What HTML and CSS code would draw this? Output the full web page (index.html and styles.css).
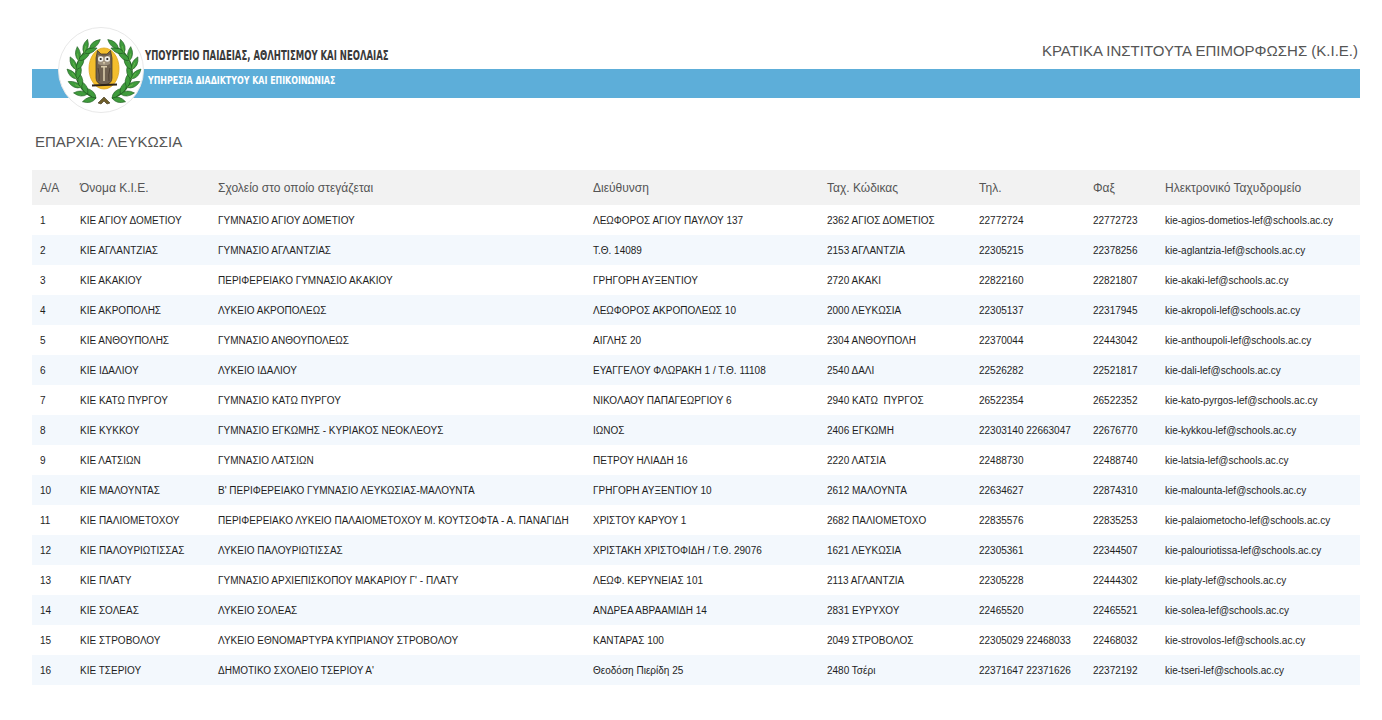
FILE: index.html
```html
<!DOCTYPE html>
<html lang="el">
<head>
<meta charset="utf-8">
<title>Κρατικά Ινστιτούτα Επιμόρφωσης</title>
<link rel="stylesheet" href="styles.css">
</head>
<body>
<div class="page">
  <header class="banner">
    <div class="logo">
      <svg width="86" height="86" viewBox="0 0 86 86">
        <defs>
          <path id="leaf" d="M0 0 Q5 -6 0 -14 Q-5 -6 0 0 Z"/>
          <g id="branch">
            <path d="M38 71.1 A27 27 0 0 1 31.5 21.6" fill="none" stroke="#2a6b25" stroke-width="1.4"/>
            <g fill="#3f9c3c" stroke="#1d5a1f" stroke-width="0.6">
              <use href="#leaf" transform="translate(38 71.1) rotate(255)"/>
              <use href="#leaf" transform="translate(38 71.1) rotate(315)"/>
              <use href="#leaf" transform="translate(29.5 67.1) rotate(275)"/>
              <use href="#leaf" transform="translate(29.5 67.1) rotate(335)"/>
              <use href="#leaf" transform="translate(22.9 60.5) rotate(295)"/>
              <use href="#leaf" transform="translate(22.9 60.5) rotate(355)"/>
              <use href="#leaf" transform="translate(18.9 52) rotate(315)"/>
              <use href="#leaf" transform="translate(18.9 52) rotate(15)"/>
              <use href="#leaf" transform="translate(18.1 42.6) rotate(335)"/>
              <use href="#leaf" transform="translate(18.1 42.6) rotate(35)"/>
              <use href="#leaf" transform="translate(20.5 33.6) rotate(355)"/>
              <use href="#leaf" transform="translate(20.5 33.6) rotate(55)"/>
              <use href="#leaf" transform="translate(25.9 25.9) rotate(15)"/>
              <use href="#leaf" transform="translate(25.9 25.9) rotate(70)"/>
              <use href="#leaf" transform="translate(31.5 21.6) rotate(50)"/>
            </g>
            <g stroke="#8fd05a" stroke-width="0.6" fill="none" opacity="0.8">
              <path d="M22.9 60.5 l-6 -3"/>
              <path d="M18.9 52 l-5 -6"/>
              <path d="M18.1 42.6 l-3 -7"/>
              <path d="M20.5 33.6 l-1 -7"/>
              <path d="M25.9 25.9 l2 -7"/>
            </g>
          </g>
        </defs>
        <circle cx="43" cy="43" r="42.5" fill="#fff" stroke="#e8e8e8" stroke-width="1"/>
        <ellipse cx="46" cy="41.5" rx="15" ry="20.5" fill="#f3be2d" stroke="#dca51d" stroke-width="0.8"/>
        <use href="#branch"/>
        <use href="#branch" transform="translate(92 0) scale(-1 1)"/>
        <path d="M40 76 L46 70 L52 76 L49 77 L46 74 L43 77 Z" fill="#6e5d2a" stroke="#3d3216" stroke-width="0.6"/>
        <path d="M38 31 L39.5 23.5 L43 27 L49 27 L52.5 23.5 L54 31 L54 51 Q54 57 46 58 Q38 57 38 51 Z" fill="#6f6150" stroke="#3b3024" stroke-width="0.7"/>
        <path d="M40 28 Q46 31 52 28 L52 37 Q46 40 40 37 Z" fill="#9d907c"/>
        <circle cx="42.7" cy="32" r="2.7" fill="#f0eee8"/>
        <circle cx="49.3" cy="32" r="2.7" fill="#f0eee8"/>
        <circle cx="42.7" cy="32" r="1.1" fill="#222"/>
        <circle cx="49.3" cy="32" r="1.1" fill="#222"/>
        <path d="M44.8 35 L47.2 35 L46 38 Z" fill="#d9ccab"/>
        <path d="M43 39 L49 39 L49 40.5 L46.8 40.5 L46.8 54 L45.2 54 L45.2 40.5 L43 40.5 Z" fill="#d9ccab"/>
        <path d="M40 41 Q42 48 41 54" stroke="#473b2e" stroke-width="0.8" fill="none"/>
        <path d="M52 41 Q50 48 51 54" stroke="#473b2e" stroke-width="0.8" fill="none"/>
        <path d="M34 58.5 L59 57.5" stroke="#2d2418" stroke-width="1.8"/>
      </svg>
    </div>
    <div class="banner-top">
      <div class="ministry"><span>ΥΠΟΥΡΓΕΙΟ ΠΑΙΔΕΙΑΣ, ΑΘΛΗΤΙΣΜΟΥ ΚΑΙ ΝΕΟΛΑΙΑΣ</span></div>
      <div class="site-title">ΚΡΑΤΙΚΑ ΙΝΣΤΙΤΟΥΤΑ ΕΠΙΜΟΡΦΩΣΗΣ (Κ.Ι.Ε.)</div>
    </div>
    <div class="banner-bar">
      <div class="service"><span>ΥΠΗΡΕΣΙΑ ΔΙΑΔΙΚΤΥΟΥ ΚΑΙ ΕΠΙΚΟΙΝΩΝΙΑΣ</span></div>
    </div>
  </header>

  <h2 class="district">ΕΠΑΡΧΙΑ: ΛΕΥΚΩΣΙΑ</h2>

  <table class="kie">
    <colgroup>
      <col class="c-aa"><col class="c-name"><col class="c-school"><col class="c-addr">
      <col class="c-zip"><col class="c-tel"><col class="c-fax"><col class="c-mail">
    </colgroup>
    <thead>
      <tr><th>Α/Α</th><th>Όνομα Κ.Ι.Ε.</th><th>Σχολείο στο οποίο στεγάζεται</th><th>Διεύθυνση</th><th>Ταχ. Κώδικας</th><th>Τηλ.</th><th>Φαξ</th><th>Ηλεκτρονικό Ταχυδρομείο</th></tr>
    </thead>
    <tbody>
      <tr><td>1</td><td>ΚΙΕ ΑΓΙΟΥ ΔΟΜΕΤΙΟΥ</td><td>ΓΥΜΝΑΣΙΟ ΑΓΙΟΥ ΔΟΜΕΤΙΟΥ</td><td>ΛΕΩΦΟΡΟΣ ΑΓΙΟΥ ΠΑΥΛΟΥ 137</td><td>2362 ΑΓΙΟΣ ΔΟΜΕΤΙΟΣ</td><td>22772724</td><td>22772723</td><td>kie-agios-dometios-lef@schools.ac.cy</td></tr>
      <tr><td>2</td><td>ΚΙΕ ΑΓΛΑΝΤΖΙΑΣ</td><td>ΓΥΜΝΑΣΙΟ ΑΓΛΑΝΤΖΙΑΣ</td><td>Τ.Θ. 14089</td><td>2153 ΑΓΛΑΝΤΖΙΑ</td><td>22305215</td><td>22378256</td><td>kie-aglantzia-lef@schools.ac.cy</td></tr>
      <tr><td>3</td><td>ΚΙΕ ΑΚΑΚΙΟΥ</td><td>ΠΕΡΙΦΕΡΕΙΑΚΟ ΓΥΜΝΑΣΙΟ ΑΚΑΚΙΟΥ</td><td>ΓΡΗΓΟΡΗ ΑΥΞΕΝΤΙΟΥ</td><td>2720 ΑΚΑΚΙ</td><td>22822160</td><td>22821807</td><td>kie-akaki-lef@schools.ac.cy</td></tr>
      <tr><td>4</td><td>ΚΙΕ ΑΚΡΟΠΟΛΗΣ</td><td>ΛΥΚΕΙΟ ΑΚΡΟΠΟΛΕΩΣ</td><td>ΛΕΩΦΟΡΟΣ ΑΚΡΟΠΟΛΕΩΣ 10</td><td>2000 ΛΕΥΚΩΣΙΑ</td><td>22305137</td><td>22317945</td><td>kie-akropoli-lef@schools.ac.cy</td></tr>
      <tr><td>5</td><td>ΚΙΕ ΑΝΘΟΥΠΟΛΗΣ</td><td>ΓΥΜΝΑΣΙΟ ΑΝΘΟΥΠΟΛΕΩΣ</td><td>ΑΙΓΛΗΣ 20</td><td>2304 ΑΝΘΟΥΠΟΛΗ</td><td>22370044</td><td>22443042</td><td>kie-anthoupoli-lef@schools.ac.cy</td></tr>
      <tr><td>6</td><td>ΚΙΕ ΙΔΑΛΙΟΥ</td><td>ΛΥΚΕΙΟ ΙΔΑΛΙΟΥ</td><td>ΕΥΑΓΓΕΛΟΥ ΦΛΩΡΑΚΗ 1 / Τ.Θ. 11108</td><td>2540 ΔΑΛΙ</td><td>22526282</td><td>22521817</td><td>kie-dali-lef@schools.ac.cy</td></tr>
      <tr><td>7</td><td>ΚΙΕ ΚΑΤΩ ΠΥΡΓΟΥ</td><td>ΓΥΜΝΑΣΙΟ ΚΑΤΩ ΠΥΡΓΟΥ</td><td>ΝΙΚΟΛΑΟΥ ΠΑΠΑΓΕΩΡΓΙΟΥ 6</td><td>2940 ΚΑΤΩ&nbsp; ΠΥΡΓΟΣ</td><td>26522354</td><td>26522352</td><td>kie-kato-pyrgos-lef@schools.ac.cy</td></tr>
      <tr><td>8</td><td>ΚΙΕ ΚΥΚΚΟΥ</td><td>ΓΥΜΝΑΣΙΟ ΕΓΚΩΜΗΣ - ΚΥΡΙΑΚΟΣ ΝΕΟΚΛΕΟΥΣ</td><td>ΙΩΝΟΣ</td><td>2406 ΕΓΚΩΜΗ</td><td>22303140 22663047</td><td>22676770</td><td>kie-kykkou-lef@schools.ac.cy</td></tr>
      <tr><td>9</td><td>ΚΙΕ ΛΑΤΣΙΩΝ</td><td>ΓΥΜΝΑΣΙΟ ΛΑΤΣΙΩΝ</td><td>ΠΕΤΡΟΥ ΗΛΙΑΔΗ 16</td><td>2220 ΛΑΤΣΙΑ</td><td>22488730</td><td>22488740</td><td>kie-latsia-lef@schools.ac.cy</td></tr>
      <tr><td>10</td><td>ΚΙΕ ΜΑΛΟΥΝΤΑΣ</td><td>Β' ΠΕΡΙΦΕΡΕΙΑΚΟ ΓΥΜΝΑΣΙΟ ΛΕΥΚΩΣΙΑΣ-ΜΑΛΟΥΝΤΑ</td><td>ΓΡΗΓΟΡΗ ΑΥΞΕΝΤΙΟΥ 10</td><td>2612 ΜΑΛΟΥΝΤΑ</td><td>22634627</td><td>22874310</td><td>kie-malounta-lef@schools.ac.cy</td></tr>
      <tr><td>11</td><td>ΚΙΕ ΠΑΛΙΟΜΕΤΟΧΟΥ</td><td>ΠΕΡΙΦΕΡΕΙΑΚΟ ΛΥΚΕΙΟ ΠΑΛΑΙΟΜΕΤΟΧΟΥ Μ. ΚΟΥΤΣΟΦΤΑ - Α. ΠΑΝΑΓΙΔΗ</td><td>ΧΡΙΣΤΟΥ ΚΑΡΥΟΥ 1</td><td>2682 ΠΑΛΙΟΜΕΤΟΧΟ</td><td>22835576</td><td>22835253</td><td>kie-palaiometocho-lef@schools.ac.cy</td></tr>
      <tr><td>12</td><td>ΚΙΕ ΠΑΛΟΥΡΙΩΤΙΣΣΑΣ</td><td>ΛΥΚΕΙΟ ΠΑΛΟΥΡΙΩΤΙΣΣΑΣ</td><td>ΧΡΙΣΤΑΚΗ ΧΡΙΣΤΟΦΙΔΗ / Τ.Θ. 29076</td><td>1621 ΛΕΥΚΩΣΙΑ</td><td>22305361</td><td>22344507</td><td>kie-palouriotissa-lef@schools.ac.cy</td></tr>
      <tr><td>13</td><td>ΚΙΕ ΠΛΑΤΥ</td><td>ΓΥΜΝΑΣΙΟ ΑΡΧΙΕΠΙΣΚΟΠΟΥ ΜΑΚΑΡΙΟΥ Γ' - ΠΛΑΤΥ</td><td>ΛΕΩΦ. ΚΕΡΥΝΕΙΑΣ 101</td><td>2113 ΑΓΛΑΝΤΖΙΑ</td><td>22305228</td><td>22444302</td><td>kie-platy-lef@schools.ac.cy</td></tr>
      <tr><td>14</td><td>ΚΙΕ ΣΟΛΕΑΣ</td><td>ΛΥΚΕΙΟ ΣΟΛΕΑΣ</td><td>ΑΝΔΡΕΑ ΑΒΡΑΑΜΙΔΗ 14</td><td>2831 ΕΥΡΥΧΟΥ</td><td>22465520</td><td>22465521</td><td>kie-solea-lef@schools.ac.cy</td></tr>
      <tr><td>15</td><td>ΚΙΕ ΣΤΡΟΒΟΛΟΥ</td><td>ΛΥΚΕΙΟ ΕΘΝΟΜΑΡΤΥΡΑ ΚΥΠΡΙΑΝΟΥ ΣΤΡΟΒΟΛΟΥ</td><td>ΚΑΝΤΑΡΑΣ 100</td><td>2049 ΣΤΡΟΒΟΛΟΣ</td><td>22305029 22468033</td><td>22468032</td><td>kie-strovolos-lef@schools.ac.cy</td></tr>
      <tr><td>16</td><td>ΚΙΕ ΤΣΕΡΙΟΥ</td><td>ΔΗΜΟΤΙΚΟ ΣΧΟΛΕΙΟ ΤΣΕΡΙΟΥ Α'</td><td>Θεοδόση Πιερίδη 25</td><td>2480 Τσέρι</td><td>22371647 22371626</td><td>22372192</td><td>kie-tseri-lef@schools.ac.cy</td></tr>
    </tbody>
  </table>
</div>
</body>
</html>
```

FILE: styles.css
```css
* { box-sizing: border-box; }
html, body { margin: 0; padding: 0; background: #fff; }
body {
  font-family: "Liberation Sans", Arial, Helvetica, sans-serif;
  color: #222;
}
.page {
  width: 1328px;
  margin-left: 32px;
}
.banner {
  position: relative;
  height: 98px;
}
.logo {
  position: absolute;
  left: 26px;
  top: 27px;
  width: 86px;
  height: 86px;
  z-index: 2;
}
.logo svg { display: block; }
.banner-top {
  display: flex;
  justify-content: space-between;
  height: 69px;
}
.ministry {
  font-family: "DejaVu Sans Condensed", "DejaVu Sans", sans-serif;
  font-stretch: condensed;
  font-weight: bold;
  font-size: 13.5px;
  line-height: 16px;
  color: #3a3a3a;
  padding-left: 113px;
  padding-top: 47px;
  white-space: nowrap;
}
.ministry span,
.service span {
  display: inline-block;
  transform-origin: 0 50%;
}
.ministry span { transform: scaleX(0.7); }
.site-title {
  font-size: 15px;
  color: #555;
  padding-top: 42px;
  padding-right: 2px;
}
.banner-bar {
  height: 29px;
  background: #5daed9;
  padding-left: 116px;
  padding-top: 5px;
}
.service {
  font-family: "DejaVu Sans Condensed", "DejaVu Sans", sans-serif;
  font-stretch: condensed;
  font-weight: bold;
  font-size: 11px;
  color: #fff;
  white-space: nowrap;
}
.service span { transform: scaleX(0.8); }
.district {
  font-size: 15px;
  font-weight: normal;
  color: #555;
  margin: 35px 0 0 3px;
  height: 37px;
}
.kie {
  width: 1328px;
  table-layout: fixed;
  border-collapse: collapse;
}
.c-aa { width: 40px; }
.c-name { width: 138px; }
.c-school { width: 375px; }
.c-addr { width: 234px; }
.c-zip { width: 152px; }
.c-tel { width: 114px; }
.c-fax { width: 72px; }
.c-mail { width: 203px; }
.kie th {
  background: #f2f2f2;
  color: #555;
  font-weight: normal;
  font-size: 12px;
  text-align: left;
  height: 35px;
  padding: 0 8px;
  white-space: nowrap;
}
.kie td {
  font-size: 10px;
  height: 30px;
  padding: 0 8px;
  white-space: nowrap;
  color: #1e1e1e;
}
.kie tbody tr:nth-child(even) td { background: #f3f8fd; }
```
